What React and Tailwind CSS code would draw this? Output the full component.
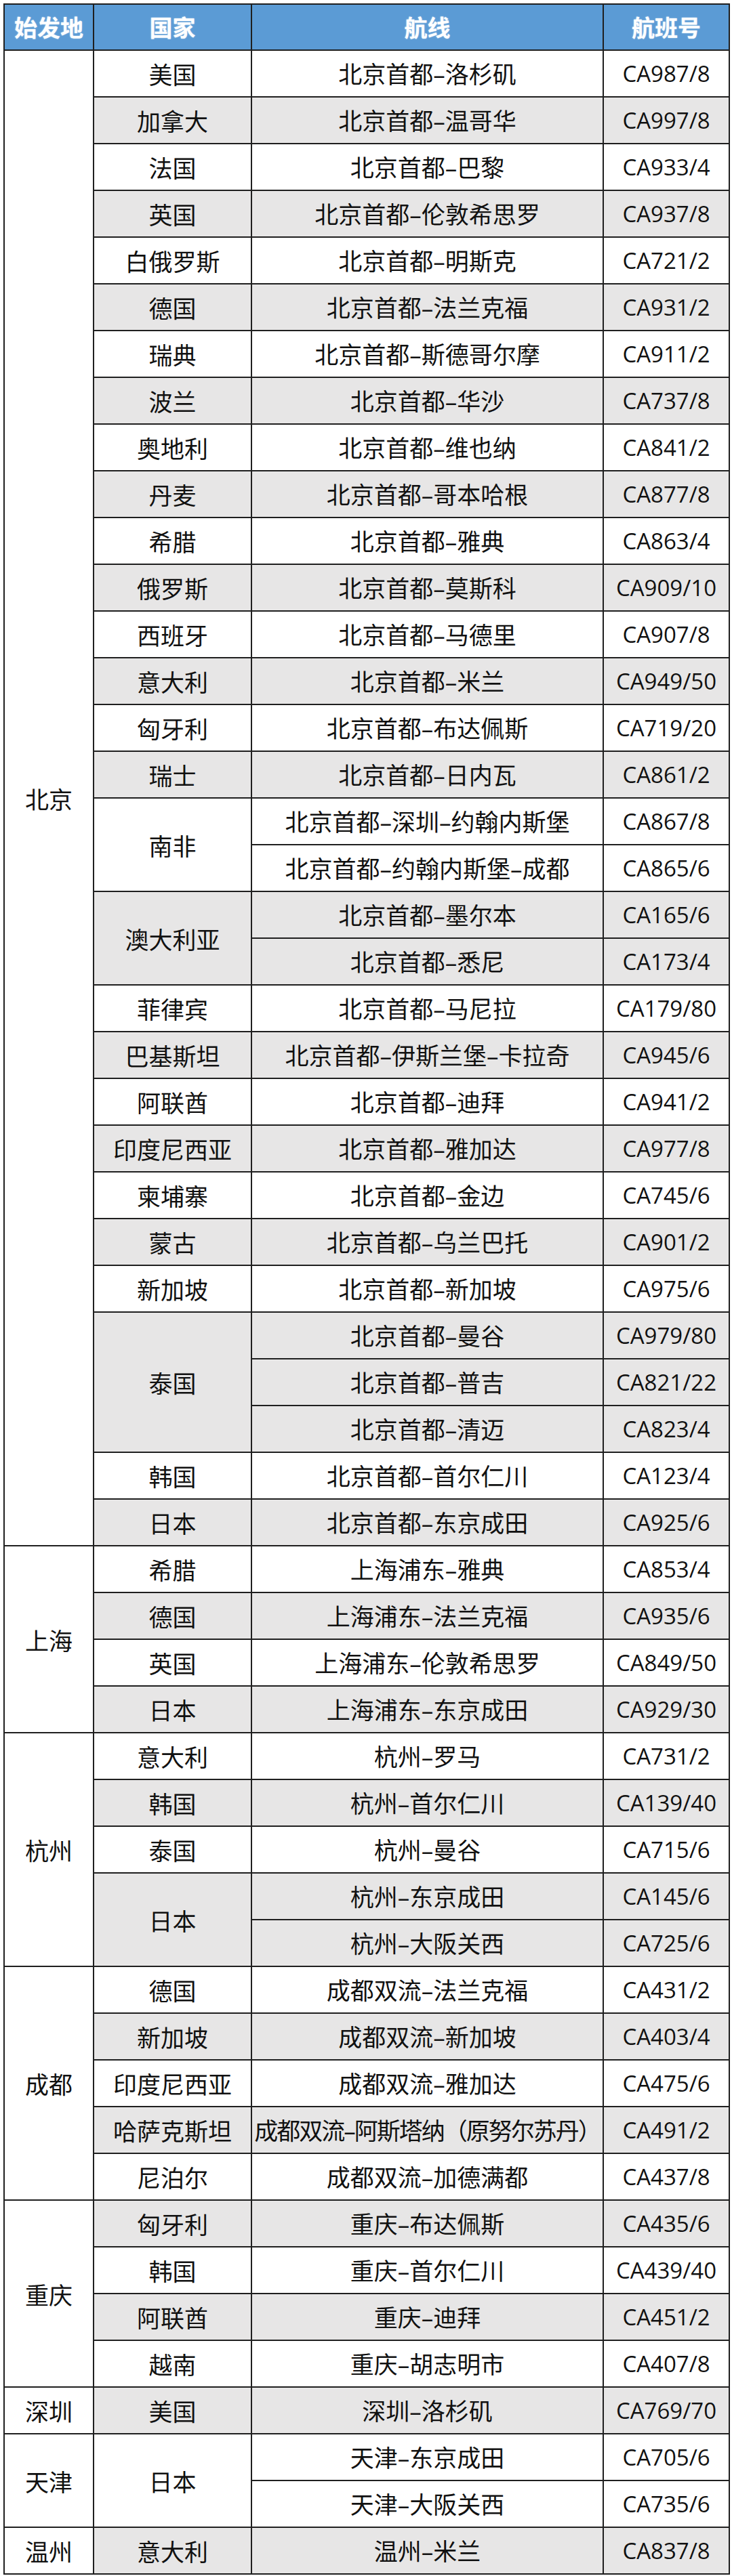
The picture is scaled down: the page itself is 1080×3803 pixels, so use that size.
// 国航国际航线一览表
const DATA = [
  {
    origin: '北京',
    countries: [
      ['美国', [['北京首都-洛杉矶', 'CA987/8']]],
      ['加拿大', [['北京首都-温哥华', 'CA997/8']]],
      ['法国', [['北京首都-巴黎', 'CA933/4']]],
      ['英国', [['北京首都-伦敦希思罗', 'CA937/8']]],
      ['白俄罗斯', [['北京首都-明斯克', 'CA721/2']]],
      ['德国', [['北京首都-法兰克福', 'CA931/2']]],
      ['瑞典', [['北京首都-斯德哥尔摩', 'CA911/2']]],
      ['波兰', [['北京首都-华沙', 'CA737/8']]],
      ['奥地利', [['北京首都-维也纳', 'CA841/2']]],
      ['丹麦', [['北京首都-哥本哈根', 'CA877/8']]],
      ['希腊', [['北京首都-雅典', 'CA863/4']]],
      ['俄罗斯', [['北京首都-莫斯科', 'CA909/10']]],
      ['西班牙', [['北京首都-马德里', 'CA907/8']]],
      ['意大利', [['北京首都-米兰', 'CA949/50']]],
      ['匈牙利', [['北京首都-布达佩斯', 'CA719/20']]],
      ['瑞士', [['北京首都-日内瓦', 'CA861/2']]],
      ['南非', [['北京首都-深圳-约翰内斯堡', 'CA867/8'], ['北京首都-约翰内斯堡-成都', 'CA865/6']]],
      ['澳大利亚', [['北京首都-墨尔本', 'CA165/6'], ['北京首都-悉尼', 'CA173/4']]],
      ['菲律宾', [['北京首都-马尼拉', 'CA179/80']]],
      ['巴基斯坦', [['北京首都-伊斯兰堡-卡拉奇', 'CA945/6']]],
      ['阿联酋', [['北京首都-迪拜', 'CA941/2']]],
      ['印度尼西亚', [['北京首都-雅加达', 'CA977/8']]],
      ['柬埔寨', [['北京首都-金边', 'CA745/6']]],
      ['蒙古', [['北京首都-乌兰巴托', 'CA901/2']]],
      ['新加坡', [['北京首都-新加坡', 'CA975/6']]],
      ['泰国', [['北京首都-曼谷', 'CA979/80'], ['北京首都-普吉', 'CA821/22'], ['北京首都-清迈', 'CA823/4']]],
      ['韩国', [['北京首都-首尔仁川', 'CA123/4']]],
      ['日本', [['北京首都-东京成田', 'CA925/6']]],
    ],
  },
  {
    origin: '上海',
    countries: [
      ['希腊', [['上海浦东-雅典', 'CA853/4']]],
      ['德国', [['上海浦东-法兰克福', 'CA935/6']]],
      ['英国', [['上海浦东-伦敦希思罗', 'CA849/50']]],
      ['日本', [['上海浦东-东京成田', 'CA929/30']]],
    ],
  },
  {
    origin: '杭州',
    countries: [
      ['意大利', [['杭州-罗马', 'CA731/2']]],
      ['韩国', [['杭州-首尔仁川', 'CA139/40']]],
      ['泰国', [['杭州-曼谷', 'CA715/6']]],
      ['日本', [['杭州-东京成田', 'CA145/6'], ['杭州-大阪关西', 'CA725/6']]],
    ],
  },
  {
    origin: '成都',
    countries: [
      ['德国', [['成都双流-法兰克福', 'CA431/2']]],
      ['新加坡', [['成都双流-新加坡', 'CA403/4']]],
      ['印度尼西亚', [['成都双流-雅加达', 'CA475/6']]],
      ['哈萨克斯坦', [['成都双流-阿斯塔纳（原努尔苏丹）', 'CA491/2']]],
      ['尼泊尔', [['成都双流-加德满都', 'CA437/8']]],
    ],
  },
  {
    origin: '重庆',
    countries: [
      ['匈牙利', [['重庆-布达佩斯', 'CA435/6']]],
      ['韩国', [['重庆-首尔仁川', 'CA439/40']]],
      ['阿联酋', [['重庆-迪拜', 'CA451/2']]],
      ['越南', [['重庆-胡志明市', 'CA407/8']]],
    ],
  },
  { origin: '深圳', countries: [['美国', [['深圳-洛杉矶', 'CA769/70']]]] },
  { origin: '天津', countries: [['日本', [['天津-东京成田', 'CA705/6'], ['天津-大阪关西', 'CA735/6']]]] },
  { origin: '温州', countries: [['意大利', [['温州-米兰', 'CA837/8']]]] },
]

const cjk = "font-['Noto_Sans_CJK_SC',sans-serif]"
const cell = 'border-2 border-[#1f1f1f] h-[69px] p-0 text-center align-middle'

// 航线里的连字符用西文短横，宽度和原表一致
function Route({ text }) {
  const parts = text.split('-')
  return parts.map((p, i) => (
    <span key={i}>
      {i > 0 && <span className="font-['Open_Sans',sans-serif]">–</span>}
      {p}
    </span>
  ))
}

export default function App() {
  const rows = []
  let band = 0

  DATA.forEach(g => {
    const originSpan = g.countries.reduce((n, [, r]) => n + r.length, 0)
    g.countries.forEach(([country, routes], ci) => {
      const bg = band % 2 === 1 ? 'bg-[#e7e6e6]' : 'bg-white'
      band++
      routes.forEach(([route, code], ri) => (
        rows.push(
          <tr key={`${g.origin}-${country}-${ri}`}>
            {ci === 0 && ri === 0 && (
              <td rowSpan={originSpan} className={`${cell} bg-white`}>{g.origin}</td>
            )}
            {ri === 0 && (
              <td rowSpan={routes.length} className={`${cell} ${bg}`}>{country}</td>
            )}
            <td className={`${cell} ${bg} whitespace-nowrap ${route.length > 14 ? 'tracking-[-2px]' : ''}`}>
              <Route text={route} />
            </td>
            <td className={`${cell} ${bg} font-['Open_Sans',sans-serif] text-[33px]`}>{code}</td>
          </tr>
        )
      ))
    })
  })

  return (
    <div className={`bg-white pt-[5px] pl-[5px] min-h-[3803px] ${cjk} text-[35px] text-[#111] leading-none`}>
      <table className="table-fixed border-collapse w-[1070px]">
        <colgroup>
          <col className="w-[132px]" />
          <col className="w-[233px]" />
          <col className="w-[519px]" />
          <col className="w-[186px]" />
        </colgroup>
        <thead>
          <tr className="bg-[#5b9bd5] text-white font-black text-[34px]">
            {['始发地', '国家', '航线', '航班号'].map(h => (
              <th key={h} className="border-2 border-[#1f1f1f] h-[68px] p-0 text-center align-middle [text-shadow:0_0_2px_rgba(255,255,255,0.6)]">
                {h}
              </th>
            ))}
          </tr>
        </thead>
        <tbody>{rows}</tbody>
      </table>
    </div>
  )
}
